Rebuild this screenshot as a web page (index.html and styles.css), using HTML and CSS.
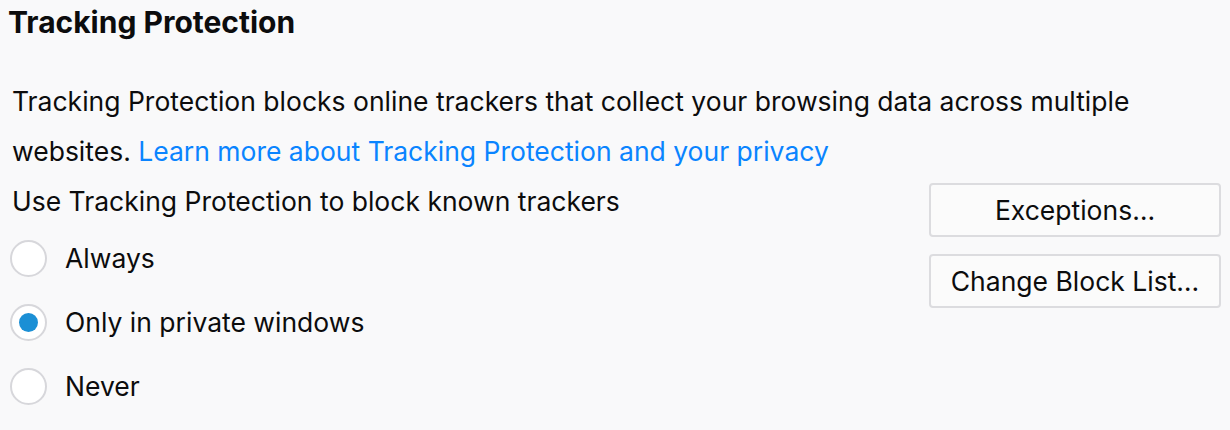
FILE: index.html
```html
<!DOCTYPE html>
<html lang="en">
<head>
  <meta charset="UTF-8">
  <title>Tracking Protection</title>
  <link rel="stylesheet" href="styles.css">
</head>
<body>
  <h1 class="title">Tracking Protection</h1>
  <p class="desc">
    Tracking Protection blocks online trackers that collect your browsing data across multiple<br>
    websites. <a href="#" class="link">Learn more about Tracking Protection and your privacy</a>
  </p>
  <div class="options">
    <div class="choices">
      <div class="label">Use Tracking Protection to block known trackers</div>
      <label class="radio"><span class="dot"></span>Always</label>
      <label class="radio"><span class="dot checked"></span>Only in private windows</label>
      <label class="radio"><span class="dot"></span>Never</label>
    </div>
    <div class="buttons">
      <button class="btn">Exceptions…</button>
      <button class="btn">Change Block List…</button>
    </div>
  </div>
</body>
</html>
```

FILE: styles.css
```css
* {
  margin: 0;
  padding: 0;
  box-sizing: border-box;
}

body {
  background-color: #f9f9fa;
  color: #0c0c0d;
  font-family: Inter, "Noto Sans", sans-serif;
  font-size: 26.5px;
  padding: 0 9px 0 8px;
}

.title {
  font-size: 30px;
  font-weight: 700;
  line-height: 44px;
}

.desc {
  margin-top: 32px;
  padding-left: 4px;
  line-height: 50px;
  white-space: nowrap;
}

.link {
  color: #0a84ff;
  text-decoration: none;
}

.options {
  display: flex;
  justify-content: space-between;
  padding-left: 4px;
}

.label {
  line-height: 50px;
}

.radio {
  display: flex;
  align-items: center;
  height: 64px;
  margin-left: -2px;
}

.dot {
  width: 37px;
  height: 37px;
  border: 2px solid #d7d7db;
  border-radius: 50%;
  background-color: #fff;
  margin-right: 18px;
  display: flex;
  justify-content: center;
  align-items: center;
}

.dot.checked::after {
  content: '';
  width: 19px;
  height: 19px;
  border-radius: 50%;
  background-color: #1b8fd5;
}

.buttons {
  width: 292px;
  padding-top: 7px;
  display: flex;
  flex-direction: column;
  gap: 17px;
}

.btn {
  height: 54px;
  border: 2px solid #dcdcdf;
  border-radius: 4px;
  background-color: #fbfbfb;
  font-family: inherit;
  font-size: 26.5px;
  color: #0c0c0d;
}
```
